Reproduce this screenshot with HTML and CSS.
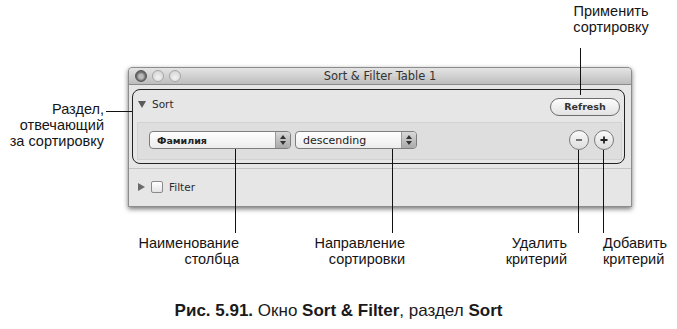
FILE: index.html
```html
<!DOCTYPE html>
<html lang="ru">
<head>
  <meta charset="UTF-8">
  <title>Sort &amp; Filter</title>
  <link rel="stylesheet" href="styles.css">
</head>
<body>
  <div class="figure">
    <div class="window">
      <div class="titlebar">
        <span class="light light-close"></span>
        <span class="light"></span>
        <span class="light"></span>
        <span class="title">Sort &amp; Filter Table 1</span>
      </div>
      <div class="content">
        <div class="group">
          <div class="group-head">
            <span class="disclosure open"></span>
            <span class="group-name">Sort</span>
            <span class="refresh">Refresh</span>
          </div>
          <div class="criteria">
            <div class="popup popup-column">
              <span class="popup-text bold">Фамилия</span>
              <span class="stepper">
                <svg width="6" height="10" viewBox="0 0 6 10"><path d="M3 0 L6 4 L0 4 Z M0 6 L6 6 L3 10 Z" fill="#333"/></svg>
              </span>
            </div>
            <div class="popup popup-order">
              <span class="popup-text">descending</span>
              <span class="stepper">
                <svg width="6" height="10" viewBox="0 0 6 10"><path d="M3 0 L6 4 L0 4 Z M0 6 L6 6 L3 10 Z" fill="#333"/></svg>
              </span>
            </div>
            <div class="round-buttons">
              <span class="round">
                <svg width="10" height="10" viewBox="0 0 10 10"><path d="M2 5 H8" stroke="#555" stroke-width="1.6"/></svg>
              </span>
              <span class="round">
                <svg width="10" height="10" viewBox="0 0 10 10"><path d="M1.5 5 H8.5 M5 1.5 V8.5" stroke="#222" stroke-width="1.8"/></svg>
              </span>
            </div>
          </div>
        </div>
        <div class="filter-row">
          <span class="disclosure closed"></span>
          <span class="checkbox"></span>
          <span class="group-name">Filter</span>
        </div>
      </div>
    </div>

    <p class="caption"><b>Рис. 5.91.</b> Окно <b>Sort &amp; Filter</b>, раздел <b>Sort</b></p>

    <!-- callouts -->
    <div class="note note-apply">Применить<br>сортировку</div>
    <div class="note note-section">Раздел,<br>отвечающий<br>за сортировку</div>
    <div class="note note-column">Наименование<br>столбца</div>
    <div class="note note-order">Направление<br>сортировки</div>
    <div class="note note-remove">Удалить<br>критерий</div>
    <div class="note note-add">Добавить<br>критерий</div>

    <span class="lead lead-apply"></span>
    <span class="lead lead-section"></span>
    <span class="lead lead-column"></span>
    <span class="lead lead-order"></span>
    <span class="lead lead-remove"></span>
    <span class="lead lead-add"></span>
  </div>
</body>
</html>
```

FILE: styles.css
```css
body {
  margin: 0;
  background: #fff;
  font-family: "Liberation Sans", Arial, sans-serif;
  color: #1a1a1a;
}

.figure {
  position: relative;
  width: 677px;
  height: 329px;
  overflow: hidden;
}

/* window */
.window {
  margin: 67px 0 0 128px;
  width: 502px;
  height: 138px;
  border: 1px solid #8c8c8c;
  border-radius: 4px 4px 0 0;
  background: #e6e6e6;
  box-shadow: 0 2px 5px rgba(0, 0, 0, 0.55);
  font-family: "DejaVu Sans", sans-serif;
}

.titlebar {
  position: relative;
  display: flex;
  align-items: center;
  gap: 5px;
  height: 16px;
  padding-left: 6px;
  border-bottom: 1px solid #8a8a8a;
  border-radius: 4px 4px 0 0;
  background: linear-gradient(#e4e4e4, #bdbdbd);
}

.light {
  width: 10px;
  height: 10px;
  border-radius: 50%;
  border: 1px solid #a6a6a6;
  background: radial-gradient(circle at 50% 65%, #f2f2f2, #cfcfcf);
}

.light-close {
  border-color: #555;
  background: radial-gradient(circle at 50% 55%, #b9b9b9 30%, #6a6a6a 60%);
}

.title {
  position: absolute;
  left: 0;
  right: 0;
  text-align: center;
  font-size: 11.5px;
  color: #333;
}

.content {
  padding: 4px 0 0 3px;
}

.group {
  width: 491px;
  height: 73px;
  border: 1px solid #222;
  border-radius: 8px;
}

.group-head {
  display: flex;
  align-items: center;
  height: 32px;
  padding: 0 4px 0 5px;
}

.group-head .refresh {
  margin-left: auto;
}

.group-name {
  font-size: 10.5px;
  color: #2a2a2a;
}

.disclosure {
  width: 0;
  height: 0;
  margin-right: 6px;
}

.disclosure.open {
  border-left: 4px solid transparent;
  border-right: 4px solid transparent;
  border-top: 7px solid #5a5a5a;
  margin-top: -4px;
}

.group-head .group-name {
  margin-top: -5px;
}

.disclosure.closed {
  border-top: 4px solid transparent;
  border-bottom: 4px solid transparent;
  border-left: 7px solid #6a6a6a;
}

.refresh {
  width: 68px;
  height: 16px;
  margin-top: 1px;
  border: 1px solid #6d6d6d;
  border-radius: 9px;
  background: linear-gradient(#fdfdfd, #e2e2e2);
  font-size: 9.5px;
  font-weight: bold;
  color: #333;
  text-align: center;
  line-height: 16px;
}

.criteria {
  display: flex;
  align-items: center;
  gap: 4px;
  height: 36px;
  margin: 0 2px 0 4px;
  padding: 0 7px 0 11px;
  border: 1px solid #d2d2d2;
  background: #dedede;
}

.popup {
  display: flex;
  align-items: center;
  height: 16px;
  margin-top: -2px;
  border: 1px solid #7d7d7d;
  border-radius: 4px;
  background: linear-gradient(#ffffff, #ececec);
  overflow: hidden;
}

.popup-column {
  width: 140px;
}

.popup-order {
  width: 120px;
}

.popup-text {
  flex: 1;
  padding-left: 7px;
  font-size: 11px;
  color: #222;
}

.popup-text.bold {
  font-size: 9.5px;
  font-weight: bold;
}

.stepper {
  display: flex;
  align-items: center;
  justify-content: center;
  width: 14px;
  height: 100%;
  border-left: 1px solid #9a9a9a;
  background: linear-gradient(#d8d8d8, #a9a9a9);
}

.round-buttons {
  display: flex;
  gap: 5px;
  margin-left: auto;
  margin-top: -2px;
}

.round {
  display: flex;
  align-items: center;
  justify-content: center;
  width: 18px;
  height: 18px;
  border: 1px solid #7a7a7a;
  border-radius: 50%;
  background: linear-gradient(#fafafa, #dcdcdc);
}

.filter-row {
  display: flex;
  align-items: center;
  height: 36px;
  margin: 4px 0 0 -3px;
  padding-left: 9px;
  border-top: 1px solid #c4c4c4;
}

.checkbox {
  width: 10px;
  height: 10px;
  margin-right: 6px;
  border: 1px solid #8a8a8a;
  border-radius: 2px;
  background: linear-gradient(#fff, #e4e4e4);
}

/* caption */
.caption {
  margin: 96px 0 0;
  text-align: center;
  font-size: 17px;
  line-height: 16px;
  color: #1a1a1a;
}

/* callouts */
.note {
  position: absolute;
  font-size: 14.5px;
  line-height: 16px;
  color: #151515;
}

.note-apply {
  left: 558px;
  top: 3px;
  width: 106px;
  text-align: center;
}

.note-section {
  left: 0;
  top: 101px;
  width: 104px;
  text-align: right;
}

.note-column {
  left: 100px;
  top: 235px;
  width: 139px;
  text-align: right;
}

.note-order {
  left: 280px;
  top: 235px;
  width: 125px;
  text-align: right;
}

.note-remove {
  left: 490px;
  top: 235px;
  width: 77px;
  text-align: right;
}

.note-add {
  left: 603px;
  top: 235px;
}

.lead {
  position: absolute;
  background: #111;
}

.lead-apply {
  left: 580px;
  top: 48px;
  width: 1px;
  height: 47px;
}

.lead-section {
  left: 106px;
  top: 111px;
  width: 26px;
  height: 1px;
}

.lead-column {
  left: 235px;
  top: 149px;
  width: 1px;
  height: 84px;
}

.lead-order {
  left: 392px;
  top: 149px;
  width: 1px;
  height: 84px;
}

.lead-remove {
  left: 578px;
  top: 150px;
  width: 1px;
  height: 83px;
}

.lead-add {
  left: 603px;
  top: 150px;
  width: 1px;
  height: 83px;
}
```
